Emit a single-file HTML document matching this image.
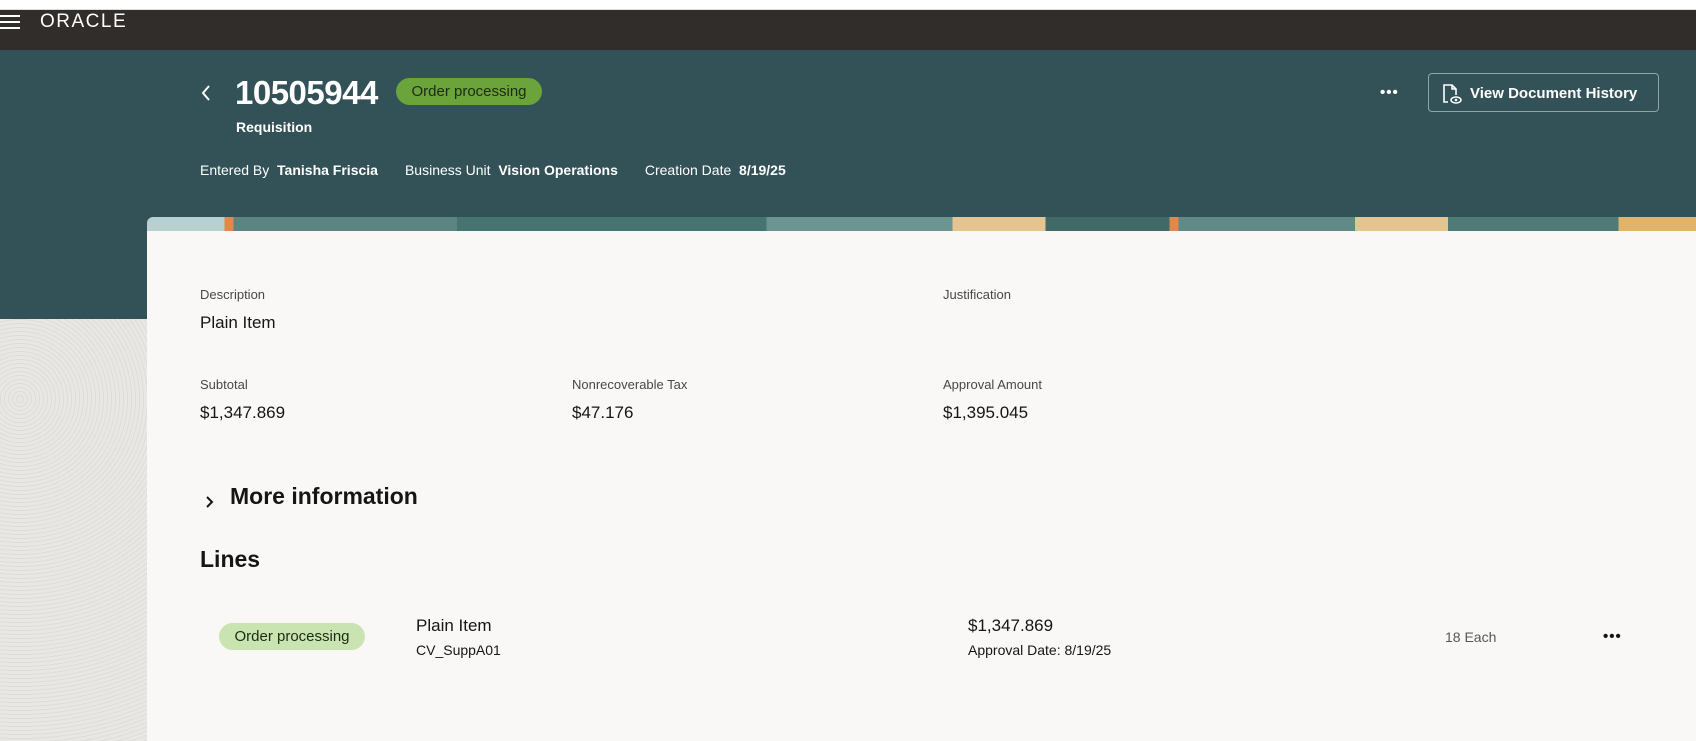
<!DOCTYPE html>
<html><head><meta charset="utf-8"><style>
*{margin:0;padding:0;box-sizing:border-box}
body{width:1696px;height:741px;overflow:hidden;background:#f9f8f6;font-family:"Liberation Sans",sans-serif;position:relative}
.a{position:absolute;white-space:nowrap}
.top{left:0;top:0;width:1696px;height:10px;background:#fff;border-bottom:1px solid #ddd}
.bar{left:0;top:10px;width:1696px;height:40px;background:#312d2a}
.teal{left:0;top:50px;width:1696px;height:269px;background:#325257}
.pat{left:0;top:319px;width:147px;height:422px;background:repeating-radial-gradient(circle at 20px 80px,#e9e7e4 0 3px,#dedcd8 3px 4px),#e6e4e1}
.band{left:147px;top:217px;width:1549px;height:14px;border-radius:6px 0 0 0;background:linear-gradient(90deg,#b8d0cf 0 5%,#e1884c 5% 5.6%,#5a8580 5.6% 20%,#467470 20% 40%,#6b9590 40% 52%,#e4c592 52% 58%,#3f6a66 58% 66%,#e1884c 66% 66.6%,#5f8a85 66.6% 78%,#e4c592 78% 84%,#4e7b76 84% 95%,#e2b46a 95% 100%)}
.card{left:147px;top:231px;width:1549px;height:510px;background:#f9f8f6}
.w{color:#fff}
.lbl{font-size:13px;color:#4a4744}
.val{font-size:17px;color:#161513}
</style></head><body>
<div class="a top"></div>
<div class="a bar"></div>
<div class="a" style="left:0;top:15px;width:20px;height:2px;background:#fff;box-shadow:0 6px 0 #fff,0 12px 0 #fff"></div>
<div class="a w" style="left:40px;top:12px;font-size:19px;letter-spacing:1.5px;line-height:20px">ORACLE</div>
<div class="a teal"></div>
<div class="a pat"></div>
<svg class="a" style="left:199px;top:84px" width="14" height="18" viewBox="0 0 14 18"><path d="M10 2 L4 9 L10 16" stroke="#fff" stroke-width="2" fill="none"/></svg>
<div class="a w" style="left:235px;top:74px;font-size:33px;font-weight:bold;letter-spacing:-0.5px">10505944</div>
<div class="a" style="left:396px;top:78px;width:146px;height:27px;border-radius:14px;background:#6aa43a;color:#1e2a12;font-size:15px;text-align:center;line-height:27px">Order processing</div>
<div class="a w" style="left:236px;top:119px;font-size:14px;font-weight:bold">Requisition</div>
<div class="a w" style="left:200px;top:162px;font-size:14px">Entered By &nbsp;<b>Tanisha Friscia</b><span style="display:inline-block;width:27px"></span>Business Unit &nbsp;<b>Vision Operations</b><span style="display:inline-block;width:27px"></span>Creation Date &nbsp;<b>8/19/25</b></div>
<div class="a w" style="left:1380px;top:84px;font-size:15px;font-weight:bold;letter-spacing:1px">•••</div>
<div class="a" style="left:1428px;top:73px;width:231px;height:39px;border:1px solid #8fa4a6;border-radius:4px"></div>
<svg class="a" style="left:1442px;top:83px" width="20" height="22" viewBox="0 0 20 22"><path d="M6 19H2V2h8l4 4v6M10 2v4h4" stroke="#fff" stroke-width="1.6" fill="none"/><ellipse cx="14" cy="17" rx="5" ry="3" stroke="#fff" stroke-width="1.5" fill="none"/><circle cx="14" cy="17" r="1.3" fill="#fff"/></svg>
<div class="a w" style="left:1470px;top:85px;font-size:15px;font-weight:bold">View Document History</div>
<div class="a band"></div>
<div class="a card"></div>
<div class="a lbl" style="left:200px;top:287px">Description</div>
<div class="a val" style="left:200px;top:313px">Plain Item</div>
<div class="a lbl" style="left:943px;top:287px">Justification</div>
<div class="a lbl" style="left:200px;top:377px">Subtotal</div>
<div class="a val" style="left:200px;top:403px">$1,347.869</div>
<div class="a lbl" style="left:572px;top:377px">Nonrecoverable Tax</div>
<div class="a val" style="left:572px;top:403px">$47.176</div>
<div class="a lbl" style="left:943px;top:377px">Approval Amount</div>
<div class="a val" style="left:943px;top:403px">$1,395.045</div>
<svg class="a" style="left:204px;top:494px" width="12" height="16" viewBox="0 0 12 16"><path d="M3 3 L8 8 L3 13" stroke="#161513" stroke-width="2" fill="none"/></svg>
<div class="a" style="left:230px;top:483px;font-size:23px;font-weight:bold;color:#161513">More information</div>
<div class="a" style="left:200px;top:546px;font-size:23px;font-weight:bold;color:#161513">Lines</div>
<div class="a" style="left:219px;top:623px;width:146px;height:27px;border-radius:14px;background:#c9e4b1;color:#1e2a12;font-size:15px;text-align:center;line-height:27px">Order processing</div>
<div class="a" style="left:416px;top:616px;font-size:17px;color:#161513">Plain Item</div>
<div class="a" style="left:416px;top:642px;font-size:14px;color:#161513">CV_SuppA01</div>
<div class="a" style="left:968px;top:616px;font-size:17px;color:#161513">$1,347.869</div>
<div class="a" style="left:968px;top:642px;font-size:14px;color:#161513">Approval Date: 8/19/25</div>
<div class="a" style="left:1445px;top:629px;font-size:14px;color:#5b5652">18 Each</div>
<div class="a" style="left:1603px;top:628px;font-size:15px;font-weight:bold;color:#161513;letter-spacing:1px">•••</div>
</body></html>
